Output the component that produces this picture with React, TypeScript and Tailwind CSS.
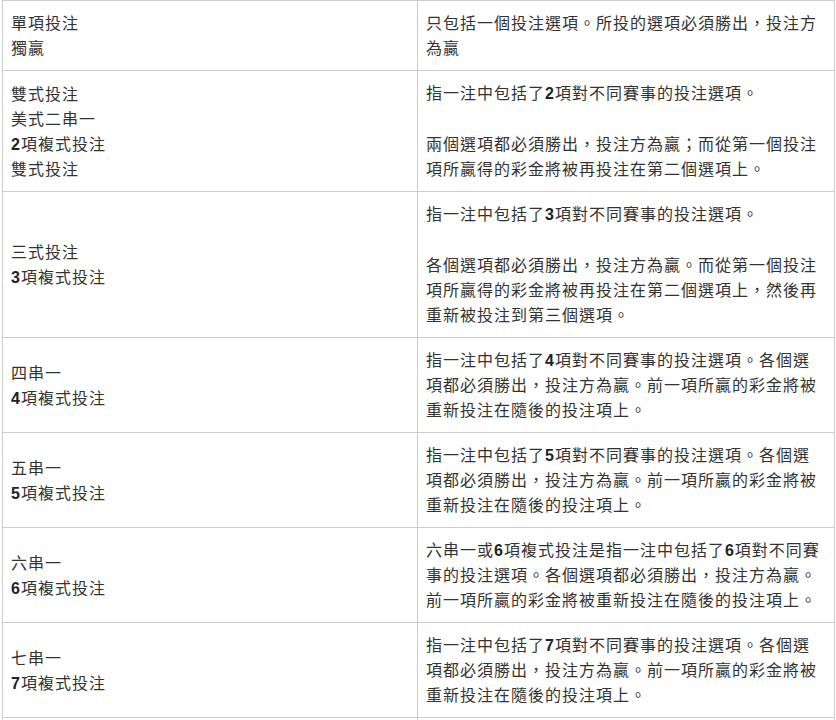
import React from "react";

type Row = { left: React.ReactNode[]; right: React.ReactNode[] };

const B = ({ children }: { children: React.ReactNode }) => (
  <b className="font-bold text-[#222]">{children}</b>
);

const rows: Row[] = [
  {
    left: ["單項投注", "獨贏"],
    right: ["只包括一個投注選項。所投的選項必須勝出，投注方為贏"],
  },
  {
    left: [
      "雙式投注",
      "美式二串一",
      <>
        <B>2</B>項複式投注
      </>,
      "雙式投注",
    ],
    right: [
      <>
        指一注中包括了<B>2</B>項對不同賽事的投注選項。
      </>,
      "兩個選項都必須勝出，投注方為贏；而從第一個投注項所贏得的彩金將被再投注在第二個選項上。",
    ],
  },
  {
    left: [
      "三式投注",
      <>
        <B>3</B>項複式投注
      </>,
    ],
    right: [
      <>
        指一注中包括了<B>3</B>項對不同賽事的投注選項。
      </>,
      "各個選項都必須勝出，投注方為贏。而從第一個投注項所贏得的彩金將被再投注在第二個選項上，然後再重新被投注到第三個選項。",
    ],
  },
  {
    left: [
      "四串一",
      <>
        <B>4</B>項複式投注
      </>,
    ],
    right: [
      <>
        指一注中包括了<B>4</B>項對不同賽事的投注選項。各個選項都必須勝出，投注方為贏。前一項所贏的彩金將被重新投注在隨後的投注項上。
      </>,
    ],
  },
  {
    left: [
      "五串一",
      <>
        <B>5</B>項複式投注
      </>,
    ],
    right: [
      <>
        指一注中包括了<B>5</B>項對不同賽事的投注選項。各個選項都必須勝出，投注方為贏。前一項所贏的彩金將被重新投注在隨後的投注項上。
      </>,
    ],
  },
  {
    left: [
      "六串一",
      <>
        <B>6</B>項複式投注
      </>,
    ],
    right: [
      <>
        六串一或<B>6</B>項複式投注是指一注中包括了<B>6</B>項對不同賽事的投注選項。各個選項都必須勝出，投注方為贏。前一項所贏的彩金將被重新投注在隨後的投注項上。
      </>,
    ],
  },
  {
    left: [
      "七串一",
      <>
        <B>7</B>項複式投注
      </>,
    ],
    right: [
      <>
        指一注中包括了<B>7</B>項對不同賽事的投注選項。各個選項都必須勝出，投注方為贏。前一項所贏的彩金將被重新投注在隨後的投注項上。
      </>,
    ],
  },
];

export default function App() {
  return (
    <div className="bg-white w-[836px] h-[720px] overflow-hidden">
      <table
        className="ml-[2px] w-[832px] border-collapse table-fixed text-[16px] leading-[25px] tracking-[1px] text-[#333]"
        style={{ fontFamily: '"Liberation Sans", "Noto Sans CJK TC", sans-serif' }}
      >
        <colgroup>
          <col className="w-[415px]" />
          <col className="w-[417px]" />
        </colgroup>
        <tbody>
          {rows.map((r, i) => (
            <tr key={i}>
              <td className="border border-[#cccccc] align-middle pl-[8px] pr-[8px] pt-[10px] pb-[9px]">
                {r.left.map((l, j) => (
                  <div key={j}>{l}</div>
                ))}
              </td>
              <td className="border border-[#cccccc] align-middle pl-[8px] pr-[8px] pt-[10px] pb-[9px]">
                {r.right.map((p, j) => (
                  <p key={j} className={j > 0 ? "mt-[26px]" : ""}>
                    {p}
                  </p>
                ))}
              </td>
            </tr>
          ))}
          <tr>
            <td className="border border-[#cccccc] h-[40px]"></td>
            <td className="border border-[#cccccc] h-[40px]"></td>
          </tr>
        </tbody>
      </table>
    </div>
  );
}
